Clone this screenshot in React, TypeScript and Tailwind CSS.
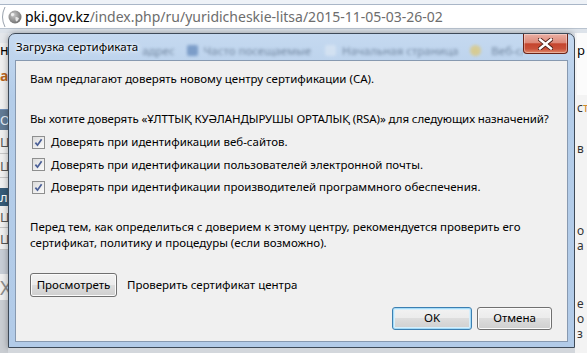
import React from 'react';

const ui = "font-['Noto_Sans','DejaVu_Sans',sans-serif]";

const Checkbox: React.FC = () => (
  <span className="flex h-[13px] w-[13px] shrink-0 items-center justify-center border border-[#8e8f8f] bg-[linear-gradient(135deg,#dcdcdc,#fbfbfb)]">
    <svg width="9" height="9" viewBox="0 0 9 9">
      <path d="M1.4 4.6 L3.5 7.2 L7.6 1.2" fill="none" stroke="#4a5f97" strokeWidth="1.7" />
    </svg>
  </span>
);

const CheckRow: React.FC<{ label: string }> = ({ label }) => (
  <div className="flex h-[22.5px] items-center pl-[2px]">
    <Checkbox />
    <span className="ml-[6px]">{label}</span>
  </div>
);

const WinButton: React.FC<{ label: string; primary?: boolean; className?: string }> = ({
  label,
  primary = false,
  className = '',
}) => (
  <button
    className={`flex h-[23px] items-center justify-center rounded-[3px] border bg-[linear-gradient(#f2f2f2_0%,#ebebeb_50%,#dddddd_50%,#cfcfcf_100%)] text-[11.5px] text-black ${
      primary
        ? 'border-[#3c7fb1] shadow-[inset_0_0_0_1px_#a5dbf7,inset_0_0_0_2px_#d7effc]'
        : 'border-[#707070] shadow-[inset_0_0_0_1px_#fbfbfb]'
    } ${className}`}
  >
    {label}
  </button>
);

// blurred bookmarks toolbar seen through the glass title bar
const GlassBlur: React.FC = () => (
  <div className="flex items-center whitespace-nowrap text-[11.5px] text-[#3f536d] opacity-60 blur-[1.4px]">
    <span className="ml-[4px]">адрес</span>
    <span className="ml-[12px] h-[11px] w-[11px] shrink-0 rounded-[2px] bg-[#4f78b0]" />
    <span className="ml-[6px]">Часто посещаемые</span>
    <span className="ml-[14px] h-[11px] w-[11px] shrink-0 rounded-[2px] bg-[#dfe9f4]" />
    <span className="ml-[6px]">Начальная страница</span>
    <span className="ml-[12px] h-[11px] w-[11px] shrink-0 rounded-full bg-[#e5c55a]" />
    <span className="ml-[10px]">Веб-слайс</span>
  </div>
);

const CloseButton: React.FC = () => (
  <div className="flex h-[20px] w-[45px] shrink-0 items-center justify-center rounded-b-[4px] border border-t-0 border-[#6b2317] bg-[linear-gradient(#eab0a4_0%,#de8a7a_45%,#c5452e_52%,#c9513a_78%,#e18a6b_100%)] shadow-[inset_0_0_0_1px_rgba(255,255,255,0.35)]">
    <svg width="15" height="12" viewBox="0 0 15 12">
      <path d="M2 1.5 L13 10.5 M13 1.5 L2 10.5" stroke="#4a1c14" strokeWidth="4.2" strokeLinecap="square" />
      <path d="M2 1.5 L13 10.5 M13 1.5 L2 10.5" stroke="#ffffff" strokeWidth="2.4" strokeLinecap="square" />
    </svg>
  </div>
);

const LeftStrip: React.FC = () => (
  <div className="flex w-[8px] shrink-0 flex-col overflow-hidden bg-[#efefef] text-[14px] leading-[14px]">
    <div className="h-[10px] bg-[#e4e7eb]" />
    <div className="h-[14px] w-[8px] overflow-hidden whitespace-nowrap text-black">н</div>
    <div className="h-[12px]" />
    <div className="h-[14px] w-[8px] overflow-hidden whitespace-nowrap font-bold text-[#b8651e]">a</div>
    <div className="h-[27px] border-b border-[#6f8fb8]" />
    <div className="h-[20px] w-[8px] overflow-hidden whitespace-nowrap bg-[#617a94] pt-[3px] text-[13px] text-[#e6edf5]">О</div>
    <div className="h-[24px] w-[8px] overflow-hidden whitespace-nowrap border-b border-[#c6c6c6] pt-[5px] text-[13px] text-[#555]">Ц</div>
    <div className="h-[24px] w-[8px] overflow-hidden whitespace-nowrap border-b border-[#c6c6c6] pt-[5px] text-[13px] text-[#555]">Ц</div>
    <div className="h-[10px]" />
    <div className="h-[18px] w-[8px] overflow-hidden whitespace-nowrap bg-[#365b78] pt-[2px] text-[13px] text-white">л</div>
    <div className="h-[22px] w-[8px] overflow-hidden whitespace-nowrap border-b border-[#c6c6c6] pt-[4px] text-[13px] text-[#555]">Ц</div>
    <div className="h-[22px] w-[8px] overflow-hidden whitespace-nowrap border-b border-[#c6c6c6] pt-[4px] text-[13px] text-[#555]">Ц</div>
    <div className="h-[24px] bg-[#c7cdd5]" />
    <div className="h-[26px] w-[8px] overflow-hidden whitespace-nowrap pt-[4px] text-[20px] leading-[20px] text-[#8c8c8c]">X</div>
    <div className="flex-1 bg-[#c9cdd2]" />
  </div>
);

const RightStrip: React.FC = () => (
  <div className="flex flex-1 flex-col overflow-hidden bg-[#f3f3f3] pl-[2px] text-[12px] leading-[14px] text-[#333]">
    <div className="h-[62px] bg-[#fbfbfb] pt-[10px] text-[13px] text-black">
      <span className="whitespace-nowrap">р</span>
    </div>
    <div className="h-[6px]" />
    <div className="h-[14px] whitespace-nowrap">
      с<span className="text-[#d08a2a]">т</span>
    </div>
    <div className="h-[27px]" />
    <div className="h-[14px] whitespace-nowrap">в</div>
    <div className="h-[68px]" />
    <div className="h-[15px] whitespace-nowrap">о</div>
    <div className="h-[15px] whitespace-nowrap">а</div>
    <div className="h-[43px]" />
    <div className="h-[15px] whitespace-nowrap">е</div>
    <div className="h-[15px] whitespace-nowrap">о</div>
    <div className="h-[15px] whitespace-nowrap">з</div>
  </div>
);

const AddressBar: React.FC = () => (
  <div className="flex h-[33px] shrink-0 flex-col bg-[#e7edf5]">
    <div className="h-[5px] border-b border-[#a9b6c7] bg-[#eef2f7]" />
    <div className="flex h-[23px] items-center bg-white">
      <svg width="6" height="22" viewBox="0 0 6 22" className="shrink-0">
        <path d="M5 1 Q0 11 5 21" fill="none" stroke="#9aa3ae" strokeWidth="1" />
      </svg>
      <svg width="14" height="14" viewBox="0 0 14 14" className="ml-[2px] shrink-0">
        <defs>
          <radialGradient id="globe" cx="40%" cy="35%" r="70%">
            <stop offset="0%" stopColor="#c9c9c9" />
            <stop offset="100%" stopColor="#6d6d6d" />
          </radialGradient>
        </defs>
        <circle cx="7" cy="7" r="6.5" fill="url(#globe)" />
        <path d="M3 3.5 Q5 2.5 6.5 4 Q6 6 4 6.5 Q2.5 5.5 3 3.5 Z" fill="#efefef" />
        <path d="M7.5 7 Q10 6.5 11 8.5 Q10 11 8 11.5 Q7 9.5 7.5 7 Z" fill="#e6e6e6" />
      </svg>
      <span className={`ml-[3px] whitespace-nowrap text-[14px] ${ui}`}>
        <span className="text-black">pki.gov.kz</span>
        <span className="text-[#6d6d6d]">/index.php/ru/yuridicheskie-litsa/2015-11-05-03-26-02</span>
      </span>
    </div>
    <div className="h-[5px] border-t border-[#b9c3cf] bg-[#dde3ea]" />
  </div>
);

const Dialog: React.FC = () => (
  <div className="flex h-[315px] flex-col rounded-t-[7px] border border-[#3e4a58] bg-[linear-gradient(180deg,#c5d9f0_0%,#b4cde9_20%,#b2cbe8_100%)] shadow-[0_0_6px_rgba(0,0,0,0.35)]">
    {/* title bar */}
    <div className="flex h-[26px] shrink-0 items-start pr-[6px]">
      <span className="mt-[5px] ml-[7px] whitespace-nowrap text-[11.5px] leading-[16px] text-black [text-shadow:0_0_6px_#ffffff,0_0_3px_#ffffff]">
        Загрузка сертификата
      </span>
      <div className="mt-[8px] flex-1 overflow-hidden">
        <GlassBlur />
      </div>
      <CloseButton />
    </div>
    {/* client area */}
    <div className="mx-[6px] flex flex-1 flex-col border border-[#8799b0] bg-[#f0f0f0] px-[14px] pt-[10px] text-[11.5px] leading-[16px] text-black">
      <p>Вам предлагают доверять новому центру сертификации (CA).</p>
      <p className="mt-[24px] whitespace-nowrap tracking-[-0.1px]">
        Вы хотите доверять «ҰЛТТЫҚ КУӘЛАНДЫРУШЫ ОРТАЛЫҚ (RSA)» для следующих назначений?
      </p>
      <div className="mt-[4px] flex flex-col">
        <CheckRow label="Доверять при идентификации веб-сайтов." />
        <CheckRow label="Доверять при идентификации пользователей электронной почты." />
        <CheckRow label="Доверять при идентификации производителей программного обеспечения." />
      </div>
      <p className="mt-[20px]">
        Перед тем, как определиться с доверием к этому центру, рекомендуется проверить его
        <br />
        сертификат, политику и процедуры (если возможно).
      </p>
      <div className="mt-[22px] flex items-center">
        <WinButton label="Просмотреть" className="h-[24px] w-[87px]" />
        <span className="ml-[10px]">Проверить сертификат центра</span>
      </div>
      <div className="mt-[10px] flex justify-end gap-[5px] pr-[1px]">
        <WinButton label="OK" primary className="w-[80px]" />
        <WinButton label="Отмена" className="w-[75px]" />
      </div>
    </div>
    <div className="h-[5px] shrink-0" />
  </div>
);

export default function App() {
  return (
    <div className={`flex h-[353px] w-[587px] flex-col overflow-hidden bg-[#e7edf5] ${ui}`}>
      <AddressBar />
      <div className="flex min-h-0 flex-1">
        <LeftStrip />
        <div className="flex w-[567px] shrink-0 flex-col">
          <Dialog />
          <div className="flex-1 bg-[#d3d7dc]" />
        </div>
        <RightStrip />
      </div>
    </div>
  );
}
